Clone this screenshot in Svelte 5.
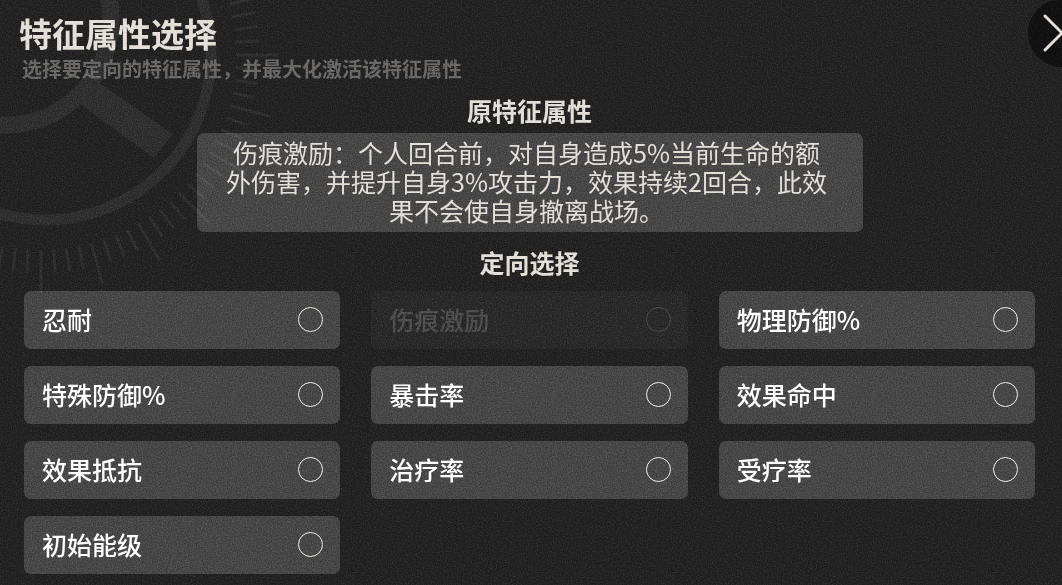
<script>
  const options = [
    { id: 'endure', label: '忍耐' },
    { id: 'scar', label: '伤痕激励', disabled: true },
    { id: 'pdef', label: '物理防御%' },
    { id: 'sdef', label: '特殊防御%' },
    { id: 'crit', label: '暴击率' },
    { id: 'hit', label: '效果命中' },
    { id: 'resist', label: '效果抵抗' },
    { id: 'heal', label: '治疗率' },
    { id: 'healed', label: '受疗率' },
    { id: 'energy', label: '初始能级' }
  ];

  let selected = $state('');

  // Dial graduations: 96 marks, every fourth one is long.
  const ticks = Array.from({ length: 96 }, (_, i) => ({
    angle: i * 3.75,
    end: i % 4 === 0 ? 237 : 218
  }));
</script>

<main class="page">
  <svg class="dial" width="300" height="300" viewBox="0 0 300 300" aria-hidden="true">
    <g fill="none" stroke="#2f2f2f">
      <circle cx="45" cy="54" r="166" stroke-width="11" />
      <circle cx="5" cy="19" r="106" stroke-width="17" />
      {#each ticks as t}
        <line x1="195" x2={t.end} y1="0" y2="0" stroke-width="3" transform="translate(41 55) rotate({t.angle})" />
      {/each}
    </g>
    <path d="M97 81 L173 134 L154 158 L80 104 Z" fill="#2f2f2f" />
  </svg>

  <header class="header">
    <h1>特征属性选择</h1>
    <p>选择要定向的特征属性，并最大化激活该特征属性</p>
  </header>

  <button class="close" type="button" aria-label="关闭">
    <svg width="68" height="68" viewBox="0 0 68 68" aria-hidden="true">
      <path d="M17 17 L51 51 M17 51 L51 17" stroke="#e6e1da" stroke-width="3" stroke-linecap="round" />
    </svg>
  </button>

  <section class="current">
    <h2>原特征属性</h2>
    <p class="panel">伤痕激励：个人回合前，对自身造成5%当前生命的额外伤害，并提升自身3%攻击力，效果持续2回合，此效果不会使自身撤离战场。</p>
  </section>

  <section class="choose">
    <h2 id="choose-title">定向选择</h2>
    <div class="grid" role="radiogroup" aria-labelledby="choose-title">
      {#each options as o}
        <label class="option" class:disabled={o.disabled} for={o.id}>
          <span>{o.label}</span>
          <input type="radio" id={o.id} name="trait" value={o.id} disabled={o.disabled} bind:group={selected} />
        </label>
      {/each}
    </div>
  </section>

  <svg class="grain" aria-hidden="true">
    <filter id="grain" x="0" y="0" width="100%" height="100%" color-interpolation-filters="sRGB">
      <feTurbulence type="fractalNoise" baseFrequency="0.8" numOctaves="2" seed="4" />
      <feColorMatrix values="1.4 0 0 0 -0.2  1.4 0 0 0 -0.2  1.4 0 0 0 -0.2  0 0 0 0 1" />
    </filter>
    <rect width="100%" height="100%" filter="url(#grain)" />
  </svg>
</main>

<style>
  :global(body) {
    background: #222222;
  }

  .page {
    position: relative;
    isolation: isolate;
    box-sizing: border-box;
    min-height: 100vh;
    padding: 9px 27px 11px 24px;
    overflow: hidden;
    background: #222222;
    color: #e4dfd8;
    font-family: 'Noto Sans CJK SC', 'Noto Sans', sans-serif;
    font-size: 25px;
  }

  h1,
  h2,
  p {
    margin: 0;
  }

  .dial {
    position: absolute;
    top: 0;
    left: 0;
    z-index: -1;
  }

  .grain {
    position: absolute;
    inset: 0;
    width: 100%;
    height: 100%;
    opacity: 0.35;
    mix-blend-mode: soft-light;
    pointer-events: none;
  }

  .header {
    margin-left: -5px;
  }

  .header h1 {
    font-size: 33px;
    line-height: 48px;
    font-weight: 700;
  }

  .header p {
    margin: 2px 0 0 3px;
    color: #6b6967;
    font-size: 20px;
    line-height: 20px;
    font-weight: 700;
  }

  .close {
    position: absolute;
    top: -1px;
    right: -34px;
    display: flex;
    padding: 0;
    border: 0;
    border-radius: 50%;
    background: #111111;
    cursor: pointer;
  }

  h2 {
    font-size: 25px;
    line-height: 30px;
    font-weight: 700;
    text-align: center;
  }

  .current {
    margin-top: 16px;
  }

  .panel {
    box-sizing: border-box;
    max-width: 666px;
    margin: 8px auto 0;
    padding: 5px 33px 7px 27px;
    border-radius: 7px;
    background: rgba(255, 255, 255, 0.17);
    line-height: 29px;
    text-align: center;
  }

  .choose {
    margin-top: 15px;
  }

  .grid {
    display: grid;
    grid-template-columns: repeat(3, 1fr);
    gap: 17px 31px;
    margin-top: 14px;
  }

  .option {
    display: flex;
    box-sizing: border-box;
    align-items: center;
    justify-content: space-between;
    height: 58px;
    padding: 0 17px 1px 18px;
    border-radius: 7px;
    background: rgba(255, 255, 255, 0.17);
    color: #ffffff;
    font-weight: 500;
    line-height: 29px;
    cursor: pointer;
  }

  .option input {
    appearance: none;
    box-sizing: border-box;
    width: 25px;
    height: 25px;
    margin: 0;
    border: 1px solid #f4efe8;
    border-radius: 50%;
    cursor: inherit;
  }

  .option input:checked {
    background: radial-gradient(circle, #e4dfd8 45%, transparent 50%);
  }

  .option.disabled {
    opacity: 0.2;
    cursor: default;
  }
</style>
